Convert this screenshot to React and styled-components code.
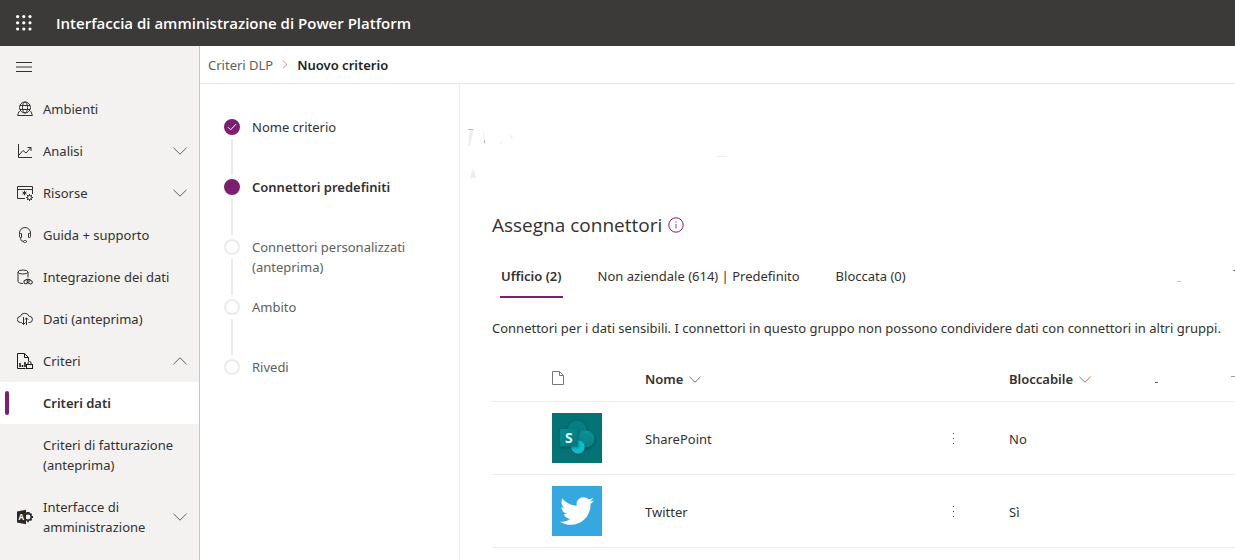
import React from "react";
import styled, { createGlobalStyle, css } from "styled-components";
import { FaTwitter } from "react-icons/fa";

const Global = createGlobalStyle`
  *, *::before, *::after { box-sizing: border-box; }
  body { margin: 0; background: #fff; color: #323130; font: 13px/20px "Noto Sans", "Open Sans", sans-serif; }
  button { font: inherit; color: inherit; background: none; border: 0; padding: 0; text-align: left; cursor: pointer; }
  a { color: inherit; text-decoration: none; }
  ul, ol { list-style: none; margin: 0; padding: 0; }
  h1, h2, p { margin: 0; }
  h1, h2 { font-family: "Open Sans", "Noto Sans", sans-serif; }
  svg { display: block; flex: none; }
`;

const purple = "#7d1f6f";

const Page = styled.div`
  display: flex;
  flex-direction: column;
  min-height: 100vh;
`;

const TopBar = styled.header`
  display: flex;
  align-items: center;
  height: 46px;
  padding-left: 16px;
  gap: 24px;
  background: #3b3a39;
  color: #fff;
`;

const AppTitle = styled.h1`
  font-size: 15px;
  font-weight: 600;
`;

const Body = styled.div`
  display: flex;
  flex: 1;
`;

const Sidebar = styled.nav`
  flex: none;
  width: 200px;
  background: #f3f2f1;
  border-right: 1px solid #c8c6c4;
`;

const MenuToggle = styled.button`
  display: flex;
  align-items: center;
  height: 42px;
  padding-left: 16px;
`;

const navRow = css`
  display: flex;
  align-items: center;
  width: 100%;
  padding: 11px 12px 11px 17px;
`;

const NavButton = styled.button`
  ${navRow}
  gap: 10px;
`;

const NavLink = styled.a`
  ${navRow}
  gap: 10px;
`;

const SubLink = styled.a`
  ${navRow}
  position: relative;
  padding-left: 43px;
  border-radius: 2px;
  ${({ $active }) =>
    $active &&
    css`
      background: #fff;
      font-weight: 600;
      &::before {
        content: "";
        position: absolute;
        left: 5px;
        top: 9px;
        bottom: 9px;
        width: 4px;
        border-radius: 2px;
        background: ${purple};
      }
    `}
`;

const Label = styled.span`
  flex: 1;
`;

const Content = styled.div`
  flex: 1;
  min-width: 0;
  display: flex;
  flex-direction: column;
`;

const Crumbs = styled.ol`
  display: flex;
  align-items: center;
  gap: 9px;
  height: 38px;
  padding-left: 8px;
  border-bottom: 1px solid #e8e6e4;
`;

const Crumb = styled.li`
  color: ${({ $current }) => ($current ? "#201f1e" : "#605e5c")};
  font-weight: ${({ $current }) => ($current ? 600 : 400)};
`;

const Columns = styled.div`
  display: flex;
  flex: 1;
`;

const Steps = styled.ol`
  flex: none;
  width: 260px;
  padding: 33px 40px 0 24px;
  border-right: 1px solid #edebe9;
`;

const Step = styled.li`
  display: flex;
  gap: 12px;
  min-height: 60px;
  color: ${({ $state }) => ($state === "todo" ? "#605e5c" : "#323130")};
  font-weight: ${({ $state }) => ($state === "current" ? 600 : 400)};
`;

const Track = styled.span`
  display: flex;
  flex-direction: column;
  align-items: center;
  gap: 4px;
  padding: 2px 0;
`;

const Dot = styled.span`
  display: grid;
  place-items: center;
  width: 16px;
  height: 16px;
  border-radius: 50%;
  border: 2px solid ${({ $filled }) => ($filled ? purple : "#edebe9")};
  background: ${({ $filled }) => ($filled ? purple : "#fff")};
`;

const Line = styled.span`
  width: 2px;
  height: 36px;
  background: #edebe9;
`;

const Main = styled.main`
  flex: 1;
  min-width: 0;
  padding-left: 32px;
`;

const Traces = styled.div`
  height: 127px;
  margin-left: -24px;
  padding-top: 44px;
`;

const Heading = styled.div`
  display: flex;
  align-items: center;
  gap: 6px;
`;

const SectionTitle = styled.h2`
  font-size: 19px;
  line-height: 28px;
  font-weight: 400;
`;

const TabRow = styled.div`
  display: flex;
  justify-content: space-between;
  align-items: center;
  margin-top: 15px;
`;

const TabBar = styled.div`
  display: flex;
  gap: 18px;
`;

const Tab = styled.button`
  position: relative;
  height: 44px;
  padding: 0 9px;
  font-weight: ${({ $active }) => ($active ? 600 : 400)};
  ${({ $active }) =>
    $active &&
    css`
      &::after {
        content: "";
        position: absolute;
        left: 8px;
        right: 8px;
        bottom: 0;
        height: 2px;
        background: ${purple};
      }
    `}
`;

const Description = styled.p`
  margin: 20px 0 18px;
  white-space: nowrap;
`;

const Table = styled.table`
  width: 100%;
  table-layout: fixed;
  border-collapse: collapse;
`;

const IconCol = styled.col`
  width: 153px;
`;

const NameCol = styled.col`
  width: 300px;
`;

const MenuCol = styled.col`
  width: 64px;
`;

const Row = styled.tr`
  height: ${({ $head }) => ($head ? 45 : 73)}px;
  border-bottom: 1px solid #edebe9;
`;

const cellBox = css`
  padding: ${({ $indent }) => ($indent ? "0 0 0 60px" : "2px 0 0")};
`;

const Cell = styled.td`
  ${cellBox}
`;

const HeadCell = styled.th`
  ${cellBox}
  text-align: left;
  font-weight: 600;
`;

const HeadTools = styled.div`
  display: flex;
  align-items: center;
  justify-content: space-between;
`;

const SortButton = styled.button`
  display: flex;
  align-items: center;
  gap: 6px;
`;

const Tile = styled.span`
  display: grid;
  place-items: center;
  width: 50px;
  height: 50px;
  background: ${({ $color }) => $color};
  color: #fff;
`;

const MoreButton = styled.button`
  display: grid;
  place-items: center;
  width: 18px;
  height: 20px;
  color: ${purple};
`;

const Icon = ({ children, size = 16, ...rest }) => (
  <svg width={size} height={size} viewBox="0 0 16 16" fill="none" stroke="#323130" strokeWidth="1" aria-hidden="true" {...rest}>
    {children}
  </svg>
);

const Chevron = ({ up, size = 14, color = "#605e5c" }) => (
  <svg width={size} height={size / 2 + 1} viewBox="0 0 14 8" fill="none" stroke={color} strokeWidth="1" aria-hidden="true">
    <path d={up ? "M.5 7.2 7 .8l6.5 6.4" : "M.5 .8 7 7.2 13.5.8"} />
  </svg>
);

const Waffle = () => (
  <svg width="16" height="16" viewBox="0 0 16 16" fill="#fff" aria-hidden="true">
    {[1.6, 7.8, 14].map((y) => [1.6, 7.8, 14].map((x) => <circle key={x + "-" + y} cx={x} cy={y} r="1.6" />))}
  </svg>
);

const icons = {
  globe: (
    <Icon>
      <circle cx="8" cy="6.5" r="5.5" />
      <ellipse cx="8" cy="6.5" rx="2.5" ry="5.5" />
      <path d="M3 4.5h10M3 8.5h10M2.6 10.5H2L.6 14.5h14.8L14 10.5h-.6" />
    </Icon>
  ),
  chart: (
    <Icon>
      <path d="M1.5 1v13.5H15M2 12l4-4.5 3 2.5 5-5.5M10.5 4.5H14V8" />
    </Icon>
  ),
  resources: (
    <Icon>
      <path d="M8 13.5H.5v-12h15V9M.5 4.5h15" />
      <path d="M7.5 5.7v4.6M5.5 6.9l4 2.3M9.5 6.9l-4 2.3" />
      <circle cx="12.5" cy="12.5" r="2" />
      <path d="M12.5 9v1.5M12.5 14.5V16M9 12.5h1.5M14.5 12.5H16M10 10l1.1 1.1M13.9 13.9l1.1 1.1M15 10l-1.1 1.1M11.1 13.9 10 15" />
    </Icon>
  ),
  headset: (
    <Icon>
      <path d="M2.5 7V6a5.5 5.5 0 0 1 11 0v1M4.5 6.5h-1a1 1 0 0 0-1 1v2a1 1 0 0 0 1 1h1zM11.5 6.5h1a1 1 0 0 1 1 1v2a1 1 0 0 1-1 1h-1zM3.5 10.5v1a3 3 0 0 0 3 3" />
      <rect x="6.5" y="13.5" width="3" height="2" rx="1" />
    </Icon>
  ),
  integration: (
    <Icon>
      <ellipse cx="6" cy="3" rx="5" ry="2" />
      <path d="M1 3v9.5c0 1.2 2.3 2 5 2M11 3v5.5" />
      <rect x="6.8" y="10.8" width="5.4" height="3.4" rx="1.7" transform="rotate(-30 9.5 12.5)" />
      <rect x="10" y="11" width="5.4" height="3.4" rx="1.7" transform="rotate(35 12.7 12.7)" />
    </Icon>
  ),
  cloud: (
    <Icon>
      <path d="M4.5 11.5h-1a3 3 0 0 1-.3-6 4.8 4.8 0 0 1 9-.2 3.1 3.1 0 0 1 .3 6.2h-1M6.5 6v7.5M4.5 11.5l2 2 2-2M9.5 14V7M7.7 8.7l1.8-1.8 1.8 1.8" />
    </Icon>
  ),
  policy: (
    <Icon stroke="#1b1a19">
      <path d="M8.5 15.5h-8V.5h7l4 4V8M7.5.5v4h4" />
      <path d="M3 14v-4M5.5 14v-2M8 14V9" strokeWidth="1.6" />
      <rect x="9.5" y="11.5" width="6" height="4" />
      <path d="M11 11.5V10a1.5 1.5 0 0 1 3 0v1.5" />
    </Icon>
  ),
  admin: (
    <Icon stroke="none" fill="#292827">
      <circle cx="11" cy="8" r="3.2" fill="none" stroke="#292827" strokeWidth="1.5" />
      <path
        d="M10.2 4.8V3M11.8 4.8V3M11 11.5V13.2M13.3 5.8l1.2-1.2M13.3 10.2l1.2 1.2M14.4 8H16"
        stroke="#292827"
        strokeWidth="1.8"
      />
      <path d="M0 2.5 9 .8v14.4L0 13.5z" />
      <text x="1.6" y="11" fontSize="8" fontWeight="700" fill="#fff" fontFamily="Open Sans, sans-serif">A</text>
    </Icon>
  ),
};

const SharePointLogo = () => (
  <svg width="50" height="50" viewBox="0 0 50 50" role="img" aria-label="SharePoint">
    <defs>
      <filter id="soft" x="-30%" y="-30%" width="160%" height="160%">
        <feGaussianBlur stdDeviation="1.3" />
      </filter>
      <linearGradient id="sq" x1="0" y1="0" x2="1" y2="1">
        <stop offset="0" stopColor="#058f92" />
        <stop offset="1" stopColor="#03767a" />
      </linearGradient>
      <linearGradient id="mid" x1="0" y1="0" x2="0" y2="1">
        <stop offset="0" stopColor="#0a9297" />
        <stop offset="1" stopColor="#087f84" />
      </linearGradient>
    </defs>
    <g fill="#024f52" opacity=".7" filter="url(#soft)">
      <circle cx="25" cy="18" r="10.5" />
      <circle cx="34" cy="27" r="9.5" />
      <circle cx="26" cy="35" r="7" />
      <rect x="8" y="16" width="19" height="19" />
    </g>
    <circle cx="25" cy="17" r="9.5" fill="#048084" />
    <circle cx="34" cy="26" r="8.5" fill="url(#mid)" />
    <circle cx="26" cy="34" r="6.7" fill="#10bcc9" />
    <path d="M9 16h18v19h-6a6 6 0 0 1-2-1H9z" fill="#02595c" opacity=".5" filter="url(#soft)" />
    <rect x="8" y="16" width="17.5" height="17.5" rx="1" fill="url(#sq)" />
    <text x="16.8" y="30" textAnchor="middle" fontSize="14" fontWeight="700" fill="#e3f4f4" fontFamily="Open Sans, sans-serif">S</text>
  </svg>
);

const FaintMarks = () => (
  <svg width="270" height="52" viewBox="0 0 270 52" fill="#efeeed" aria-hidden="true">
    <path d="M2 1h4L2 17H0zM15 4h1l1 12h-1zM5 40l3 10H2zM32 13l2 3h-2zM41 6l4 3-1 2zM249 28h10v1h-10z" />
    <path d="M0 1h5v1H0zM16 12h1v3h-1z" fill="#b9b7b5" />
  </svg>
);

const TabMarks = () => (
  <svg width="59" height="12" viewBox="0 0 59 12" aria-hidden="true">
    <path d="M1 11h4v1H1z" fill="#c8c6c4" />
    <path d="M57 0h2v1h-2z" fill="#797775" />
  </svg>
);

const HeadMarks = () => (
  <svg width="81" height="10" viewBox="0 0 81 10" aria-hidden="true">
    <path d="M1 8h3v1H1z" fill="#605e5c" />
    <path d="M77 2h4v1h-4z" fill="#a19f9d" />
  </svg>
);

const nav = [
  { icon: "globe", text: "Ambienti" },
  { icon: "chart", text: "Analisi", open: false },
  { icon: "resources", text: "Risorse", open: false },
  { icon: "headset", text: "Guida + supporto" },
  { icon: "integration", text: "Integrazione dei dati" },
  { icon: "cloud", text: "Dati (anteprima)" },
  {
    icon: "policy",
    text: "Criteri",
    open: true,
    children: [{ text: "Criteri dati", active: true }, { text: "Criteri di fatturazione (anteprima)" }],
  },
  { icon: "admin", text: "Interfacce di amministrazione", open: false },
];

const steps = [
  { text: "Nome criterio", state: "done" },
  { text: "Connettori predefiniti", state: "current" },
  { text: "Connettori personalizzati (anteprima)", state: "todo" },
  { text: "Ambito", state: "todo" },
  { text: "Rivedi", state: "todo" },
];

const tabs = ["Ufficio (2)", "Non aziendale (614) | Predefinito", "Bloccata (0)"];

const connectors = [
  { name: "SharePoint", blockable: "No", color: "#037375", logo: <SharePointLogo /> },
  { name: "Twitter", blockable: "Sì", color: "#34a8df", logo: <FaTwitter size={34} aria-hidden="true" /> },
];

const NavItem = ({ item }) => (
  <li>
    {item.open === undefined ? (
      <NavLink href="#">
        {icons[item.icon]}
        <Label>{item.text}</Label>
      </NavLink>
    ) : (
      <NavButton type="button" aria-expanded={item.open}>
        {icons[item.icon]}
        <Label>{item.text}</Label>
        <Chevron up={item.open} />
      </NavButton>
    )}
    {item.children && (
      <ul>
        {item.children.map((c) => (
          <li key={c.text}>
            <SubLink href="#" $active={c.active} aria-current={c.active ? "page" : undefined}>
              {c.text}
            </SubLink>
          </li>
        ))}
      </ul>
    )}
  </li>
);

export default function App() {
  return (
    <Page>
      <Global />
      <TopBar>
        <button type="button" aria-label="App">
          <Waffle />
        </button>
        <AppTitle>Interfaccia di amministrazione di Power Platform</AppTitle>
      </TopBar>
      <Body>
        <Sidebar>
          <MenuToggle type="button" aria-label="Menu">
            <Icon>
              <path d="M0 3.5h16M0 8h16M0 12.5h16" />
            </Icon>
          </MenuToggle>
          <ul>
            {nav.map((item) => (
              <NavItem key={item.text} item={item} />
            ))}
          </ul>
        </Sidebar>
        <Content>
          <Crumbs>
            <Crumb>
              <a href="#">Criteri DLP</a>
            </Crumb>
            <li aria-hidden="true">
              <svg width="6" height="9" viewBox="0 0 6 9" fill="none" stroke="#a19f9d">
                <path d="M.8.5 5 4.5.8 8.5" />
              </svg>
            </li>
            <Crumb $current aria-current="page">
              Nuovo criterio
            </Crumb>
          </Crumbs>
          <Columns>
            <Steps>
              {steps.map((s, i) => (
                <Step key={s.text} $state={s.state}>
                  <Track>
                    <Dot $filled={s.state !== "todo"}>
                      {s.state === "done" && (
                        <svg width="10" height="8" viewBox="0 0 10 8" fill="none" stroke="#fff">
                          <path d="M1 4.2 3.6 6.8 9 1.2" />
                        </svg>
                      )}
                    </Dot>
                    {i < steps.length - 1 && <Line />}
                  </Track>
                  <Label>{s.text}</Label>
                </Step>
              ))}
            </Steps>
            <Main>
              <Traces>
                <FaintMarks />
              </Traces>
              <Heading>
                <SectionTitle>Assegna connettori</SectionTitle>
                <button type="button" aria-label="Informazioni">
                  <Icon stroke={purple}>
                    <circle cx="8" cy="8" r="7.2" />
                    <path d="M8 7v4.5M8 4.5v1.2" stroke="#605e5c" />
                  </Icon>
                </button>
              </Heading>
              <TabRow>
                <TabBar role="tablist">
                  {tabs.map((t, i) => (
                    <Tab key={t} type="button" role="tab" aria-selected={i === 0} $active={i === 0}>
                      {t}
                    </Tab>
                  ))}
                </TabBar>
                <TabMarks />
              </TabRow>
              <Description>
                Connettori per i dati sensibili. I connettori in questo gruppo non possono condividere dati con connettori in altri gruppi.
              </Description>
              <Table>
                <colgroup>
                  <IconCol />
                  <NameCol />
                  <MenuCol />
                  <col />
                </colgroup>
                <thead>
                  <Row $head>
                    <HeadCell $indent aria-label="Icona">
                      <svg width="12" height="14" viewBox="0 0 12 14" fill="none" stroke="#797775">
                        <path d="M.5.5h7l4 4v9H.5zM7.5.5v4h4" />
                      </svg>
                    </HeadCell>
                    <HeadCell>
                      <SortButton type="button">
                        Nome <Chevron size={12} />
                      </SortButton>
                    </HeadCell>
                    <HeadCell />
                    <HeadCell>
                      <HeadTools>
                        <SortButton type="button">
                          Bloccabile <Chevron size={12} color="#a4562f" />
                        </SortButton>
                        <HeadMarks />
                      </HeadTools>
                    </HeadCell>
                  </Row>
                </thead>
                <tbody>
                  {connectors.map((c) => (
                    <Row key={c.name}>
                      <Cell $indent>
                        <Tile $color={c.color}>{c.logo}</Tile>
                      </Cell>
                      <Cell>{c.name}</Cell>
                      <Cell>
                        <MoreButton type="button" aria-label={"Altre azioni per " + c.name}>
                          <svg width="2" height="11" viewBox="0 0 2 11" fill="currentColor">
                            <path d="M0 0h1v1H0zM0 5h1v1H0zM0 10h1v1H0z" />
                          </svg>
                        </MoreButton>
                      </Cell>
                      <Cell>{c.blockable}</Cell>
                    </Row>
                  ))}
                </tbody>
              </Table>
            </Main>
          </Columns>
        </Content>
      </Body>
    </Page>
  );
}
